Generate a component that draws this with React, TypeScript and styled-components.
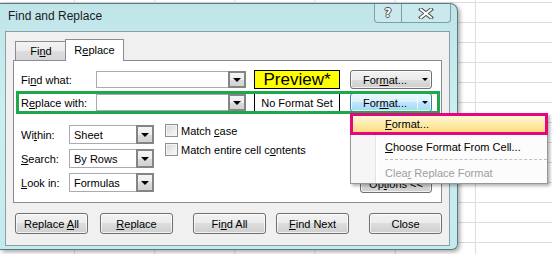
import React from 'react';
import styled, { createGlobalStyle, css } from 'styled-components';

const GlobalStyle = createGlobalStyle`
  html, body {
    margin: 0;
    padding: 0;
  }
  body {
    font-family: "Liberation Sans", Arial, sans-serif;
    font-size: 11px;
    color: #000;
  }
`;

// excel sheet behind the dialog
const Sheet = styled.div`
  position: relative;
  width: 552px;
  height: 254px;
  box-sizing: border-box;
  padding-top: 3px;
  overflow: hidden;
  background-color: #fff;
  background-image: linear-gradient(to right, #dadcdd 1px, transparent 1px),
    linear-gradient(to bottom, #dadcdd 1px, transparent 1px);
  background-size: 80.2px 100%, 100% 20px;
  background-position: 74px 0, 0 2px;
`;

const Dialog = styled.div`
  width: 458px;
  height: 247px;
  box-sizing: border-box;
  display: flex;
  flex-direction: column;
  padding: 0 7px 3px 5px;
  border: 1px solid #5b7a84;
  border-left: none;
  border-radius: 0 8px 6px 0;
  background: linear-gradient(to bottom, #c0e5e9, #cbeef0 45%, #c5eaed);
  box-shadow: 2px 2px 4px rgba(0, 0, 0, 0.35);
`;

const TitleBar = styled.div`
  height: 27px;
  display: flex;
  align-items: flex-start;
`;

const Title = styled.div`
  padding: 5px 0 0 3px;
  font-size: 12px;
  line-height: 15px;
  color: #1b1b1b;
`;

const CaptionGroup = styled.div`
  margin-left: auto;
  margin-right: -1px;
  height: 18px;
  display: flex;
  border: 1px solid #7d9ea5;
  border-top: none;
  border-radius: 0 0 4px 4px;
  background: rgba(255, 255, 255, 0.15);
`;

const CaptionButton = styled.div<{ $w: number }>`
  width: ${(p) => p.$w}px;
  display: flex;
  align-items: center;
  justify-content: center;
  & + & {
    border-left: 1px solid #7d9ea5;
  }
`;

const HelpGlyph = styled.span`
  font-family: "DejaVu Sans", sans-serif;
  font-weight: bold;
  font-size: 12px;
  line-height: 12px;
  color: #fff;
  text-shadow: 1px 0 #4a4a4a, -1px 0 #4a4a4a, 0 1px #4a4a4a, 0 -1px #4a4a4a;
`;

const Client = styled.div`
  height: 215px;
  box-sizing: border-box;
  border: 1px solid #8aa0a7;
  background: #f0f0f0;
  padding: 0 0 0 7px;
  display: flex;
  flex-direction: column;
`;

const TabStrip = styled.div`
  position: relative;
  z-index: 1;
  margin-top: 7px;
  margin-bottom: -1px;
  height: 22px;
  padding-left: 2px;
  display: flex;
  align-items: flex-end;
`;

const Tab = styled.div<{ $active?: boolean }>`
  box-sizing: border-box;
  border: 1px solid #898c95;
  display: flex;
  justify-content: center;
  ${(p) =>
    p.$active
      ? css`
          width: 59px;
          height: 22px;
          border-bottom: none;
          background: #fff;
          margin-left: -1px;
          padding-top: 4px;
        `
      : css`
          width: 51px;
          height: 19px;
          margin-bottom: 1px;
          border-bottom: none;
          border-right: none;
          background: linear-gradient(#f3f3f3, #ebebeb 50%, #dedede 50%, #d6d6d6);
          padding-top: 3px;
        `}
`;

const Panel = styled.div`
  width: 429px;
  height: 143px;
  box-sizing: border-box;
  border: 1px solid #898c95;
  background: #fff;
  padding: 9px 9px 0 7px;
`;

const Row = styled.div<{ $marked?: boolean }>`
  position: relative;
  height: 19px;
  display: flex;
  align-items: center;
  ${(p) =>
    p.$marked &&
    css`
      margin-top: 4px;
      &::after {
        content: '';
        position: absolute;
        top: -2px;
        bottom: -2px;
        left: -5px;
        right: -8px;
        border: 3px solid #1ea84b;
        pointer-events: none;
      }
    `}
`;

const Label = styled.span<{ $w: number }>`
  width: ${(p) => p.$w}px;
  flex: none;
`;

const Combo = styled.div<{ $w: number; $h: number }>`
  width: ${(p) => p.$w}px;
  height: ${(p) => p.$h}px;
  flex: none;
  box-sizing: border-box;
  border: 1px solid #a9abb2;
  background: #fff;
  display: flex;
  align-items: center;
`;

const ComboText = styled.span`
  flex: 1;
  padding-left: 4px;
`;

const DropButton = styled.span`
  width: 18px;
  align-self: stretch;
  box-sizing: border-box;
  margin: -1px -1px -1px 0;
  border: 2px solid #858585;
  background: linear-gradient(#f4f4f4, #ececec 50%, #dcdcdc 50%, #d2d2d2);
  display: flex;
  align-items: center;
  justify-content: center;
  &::after {
    content: '';
    border-left: 4px solid transparent;
    border-right: 4px solid transparent;
    border-top: 4px solid #000;
  }
`;

const Swatch = styled.div<{ $preview?: boolean }>`
  width: 86px;
  height: 19px;
  flex: none;
  box-sizing: border-box;
  margin-left: 8px;
  border: 1px solid #000;
  display: flex;
  align-items: center;
  justify-content: center;
  background: ${(p) => (p.$preview ? '#ffff00' : '#fff')};
  font-size: ${(p) => (p.$preview ? '17px' : '11px')};
`;

const buttonFace = css`
  box-sizing: border-box;
  border: 1px solid #707070;
  border-radius: 3px;
  background: linear-gradient(#f2f2f2, #ebebeb 50%, #dddddd 50%, #cfcfcf);
  box-shadow: inset 0 0 0 1px rgba(255, 255, 255, 0.7);
  display: flex;
  align-items: center;
  justify-content: center;
`;

const FormatButton = styled.div<{ $hot?: boolean }>`
  ${buttonFace}
  width: 82px;
  height: 19px;
  margin-left: 10px;
  justify-content: flex-start;
  ${(p) =>
    p.$hot &&
    css`
      border-color: #3c7fb1;
      background: linear-gradient(#eaf6fd, #d9f0fc 50%, #bee6fd 50%, #a7d9f5);
    `}
`;

const FormatText = styled.span`
  flex: 1;
  text-align: center;
  padding-left: 2px;
`;

const SplitArrow = styled.span<{ $hot?: boolean }>`
  width: 14px;
  align-self: stretch;
  box-sizing: border-box;
  display: flex;
  align-items: center;
  justify-content: center;
  border-left: 1px solid ${(p) => (p.$hot ? '#f4fbff' : 'transparent')};
  margin: 2px 0;
  &::after {
    content: '';
    border-left: 3px solid transparent;
    border-right: 3px solid transparent;
    border-top: 3px solid #000;
  }
`;

const Lower = styled.div`
  margin-top: 13px;
  display: flex;
`;

const SelectColumn = styled.div`
  display: flex;
  flex-direction: column;
  gap: 5px;
`;

const CheckColumn = styled.div`
  margin-left: 11px;
  margin-top: -1px;
  display: flex;
  flex-direction: column;
  gap: 6px;
`;

const CheckItem = styled.label`
  height: 13px;
  display: flex;
  align-items: center;
  gap: 3px;
`;

const CheckBox = styled.span`
  width: 13px;
  height: 13px;
  box-sizing: border-box;
  border: 1px solid #8e8f8f;
  background: linear-gradient(135deg, #d6d6d6, #f4f4f4 80%);
  box-shadow: inset 0 0 0 1px #f4f4f4;
`;

const OptionsButton = styled.div`
  ${buttonFace}
  width: 72px;
  height: 19px;
  margin-left: auto;
  align-self: flex-end;
  margin-bottom: -1px;
`;

const ButtonRow = styled.div`
  margin-top: 10px;
  padding-left: 2px;
  display: flex;
`;

const PushButton = styled.div<{ $gap?: number }>`
  ${buttonFace}
  width: 73px;
  height: 21px;
  margin-left: ${(p) => p.$gap ?? 0}px;
`;

// dropdown of the Format... split button
const Menu = styled.div`
  position: absolute;
  left: 350px;
  top: 113px;
  width: 198px;
  height: 71px;
  box-sizing: border-box;
  border: 1px solid #979797;
  background: linear-gradient(to right, #f6f6f6 0 24px, #e2e3e3 24px 25px, #fff 25px 26px, #fcfcfc 26px);
  box-shadow: 2px 2px 3px rgba(0, 0, 0, 0.3);
`;

const MenuItem = styled.div<{ $selected?: boolean; $disabled?: boolean }>`
  height: 20px;
  box-sizing: border-box;
  display: flex;
  align-items: center;
  padding-left: 34px;
  color: ${(p) => (p.$disabled ? '#9d9d9d' : '#000')};
  ${(p) =>
    p.$selected &&
    css`
      height: 22px;
      margin: -1px -1px 2px -1px;
      padding-left: 32px;
      border: 3px solid #e8067f;
      background: linear-gradient(#fff8dc, #fdeaa9 50%, #fbdc85);
    `}
`;

const MenuSeparator = styled.div`
  margin: 2px 0 3px 34px;
  border-top: 1px dashed #c2c2c2;
`;

const XIcon = () => (
  <svg width="18" height="11" viewBox="0 0 18 11">
    <path d="M4 1.5 L14 9.5 M14 1.5 L4 9.5" stroke="#4a4a4a" strokeWidth="4" strokeLinecap="square" />
    <path d="M4 1.5 L14 9.5 M14 1.5 L4 9.5" stroke="#fff" strokeWidth="2" strokeLinecap="square" />
  </svg>
);

const App = () => {
  return (
    <Sheet>
      <GlobalStyle />
      <Dialog>
        <TitleBar>
          <Title>Find and Replace</Title>
          <CaptionGroup>
            <CaptionButton $w={26}>
              <HelpGlyph>?</HelpGlyph>
            </CaptionButton>
            <CaptionButton $w={48}>
              <XIcon />
            </CaptionButton>
          </CaptionGroup>
        </TitleBar>
        <Client>
          <TabStrip>
            <Tab>
              <span>
                Fi<u>n</u>d
              </span>
            </Tab>
            <Tab $active>
              <span>
                R<u>e</u>place
              </span>
            </Tab>
          </TabStrip>
          <Panel>
            <Row>
              <Label $w={75}>
                Fi<u>n</u>d what:
              </Label>
              <Combo $w={150} $h={17}>
                <ComboText />
                <DropButton />
              </Combo>
              <Swatch $preview>Preview*</Swatch>
              <FormatButton>
                <FormatText>
                  For<u>m</u>at...
                </FormatText>
                <SplitArrow />
              </FormatButton>
            </Row>
            <Row $marked>
              <Label $w={75}>
                R<u>e</u>place with:
              </Label>
              <Combo $w={150} $h={17}>
                <ComboText />
                <DropButton />
              </Combo>
              <Swatch>No Format Set</Swatch>
              <FormatButton $hot>
                <FormatText>
                  For<u>m</u>at...
                </FormatText>
                <SplitArrow $hot />
              </FormatButton>
            </Row>
            <Lower>
              <SelectColumn>
                <Row>
                  <Label $w={48}>
                    Wi<u>t</u>hin:
                  </Label>
                  <Combo $w={85} $h={19}>
                    <ComboText>Sheet</ComboText>
                    <DropButton />
                  </Combo>
                </Row>
                <Row>
                  <Label $w={48}>
                    <u>S</u>earch:
                  </Label>
                  <Combo $w={85} $h={19}>
                    <ComboText>By Rows</ComboText>
                    <DropButton />
                  </Combo>
                </Row>
                <Row>
                  <Label $w={48}>
                    <u>L</u>ook in:
                  </Label>
                  <Combo $w={85} $h={19}>
                    <ComboText>Formulas</ComboText>
                    <DropButton />
                  </Combo>
                </Row>
              </SelectColumn>
              <CheckColumn>
                <CheckItem>
                  <CheckBox />
                  <span>
                    Match <u>c</u>ase
                  </span>
                </CheckItem>
                <CheckItem>
                  <CheckBox />
                  <span>
                    Match entire cell c<u>o</u>ntents
                  </span>
                </CheckItem>
              </CheckColumn>
              <OptionsButton>
                Op<u>t</u>ions &lt;&lt;
              </OptionsButton>
            </Lower>
          </Panel>
          <ButtonRow>
            <PushButton>
              <span>
                Replace <u>A</u>ll
              </span>
            </PushButton>
            <PushButton $gap={12}>
              <span>
                <u>R</u>eplace
              </span>
            </PushButton>
            <PushButton $gap={20}>
              <span>
                Fi<u>n</u>d All
              </span>
            </PushButton>
            <PushButton $gap={10}>
              <span>
                <u>F</u>ind Next
              </span>
            </PushButton>
            <PushButton $gap={20}>Close</PushButton>
          </ButtonRow>
        </Client>
      </Dialog>
      <Menu>
        <MenuItem $selected>
          <span>
            <u>F</u>ormat...
          </span>
        </MenuItem>
        <MenuItem>
          <span>
            <u>C</u>hoose Format From Cell...
          </span>
        </MenuItem>
        <MenuSeparator />
        <MenuItem $disabled>
          <span>
            Clea<u>r</u> Replace Format
          </span>
        </MenuItem>
      </Menu>
    </Sheet>
  );
};

export default App;
